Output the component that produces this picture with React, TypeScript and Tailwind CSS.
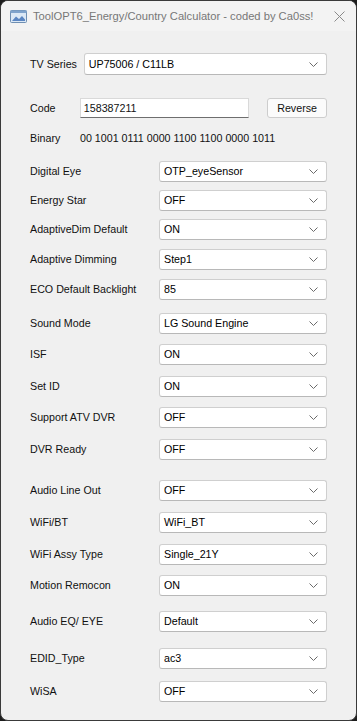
import React from "react";

interface Row {
  label: string;
  value: string;
  mt: string;
}

const rows: Row[] = [
  { label: "Digital Eye", value: "OTP_eyeSensor", mt: "mt-[15px]" },
  { label: "Energy Star", value: "OFF", mt: "mt-[8px]" },
  { label: "AdaptiveDim Default", value: "ON", mt: "mt-[8px]" },
  { label: "Adaptive Dimming", value: "Step1", mt: "mt-[9px]" },
  { label: "ECO Default Backlight", value: "85", mt: "mt-[9px]" },
  { label: "Sound Mode", value: "LG Sound Engine", mt: "mt-[13px]" },
  { label: "ISF", value: "ON", mt: "mt-[10px]" },
  { label: "Set ID", value: "ON", mt: "mt-[11px]" },
  { label: "Support ATV DVR", value: "OFF", mt: "mt-[10px]" },
  { label: "DVR Ready", value: "OFF", mt: "mt-[11px]" },
  { label: "Audio Line Out", value: "OFF", mt: "mt-[20px]" },
  { label: "WiFi/BT", value: "WiFi_BT", mt: "mt-[11px]" },
  { label: "WiFi Assy Type", value: "Single_21Y", mt: "mt-[11px]" },
  { label: "Motion Remocon", value: "ON", mt: "mt-[10px]" },
  { label: "Audio EQ/ EYE", value: "Default", mt: "mt-[15px]" },
  { label: "EDID_Type", value: "ac3", mt: "mt-[16px]" },
  { label: "WiSA", value: "OFF", mt: "mt-[12px]" },
];

const Chevron = () => (
  <svg width="9" height="5" viewBox="0 0 9 5" className="shrink-0">
    <path d="M0.5 0.5 L4.5 4.5 L8.5 0.5" fill="none" stroke="#6b6b6b" strokeWidth="1" />
  </svg>
);

const Combo = ({ value, className }: { value: string; className: string }) => (
  <div
    className={`${className} flex items-center justify-between bg-white border border-[#cfcfcf] border-b-[#b8b8b8] rounded-[3px] pl-[4px] pr-[8px] text-black`}
  >
    <span>{value}</span>
    <Chevron />
  </div>
);

const WinIcon = () => (
  <svg width="17" height="13" viewBox="0 0 17 13">
    <rect x="0.5" y="0.5" width="16" height="12" rx="1" fill="#dbe8f5" stroke="#6f8fb3" />
    <rect x="0.5" y="0.5" width="16" height="2.5" fill="#7fa3cc" />
    <path d="M2 11 L6 6.5 L9 9 L12 6 L15 9.5 L15 11 Z" fill="#5b86c2" />
  </svg>
);

export default function App() {
  return (
    <div className="w-[357px] h-[721px] bg-[#1d1d1d]">
      <div
        className="h-full flex flex-col bg-[#f0f0f0] border border-[#3a3a3a] rounded-[8px] overflow-hidden text-[10.7px] text-[#111]"
        style={{ fontFamily: '"Liberation Sans", Arial, sans-serif' }}
      >
        {/* Title bar */}
        <div className="h-[30px] flex items-center bg-[#f3f3f3] pl-[9px] pr-[10px]">
          <WinIcon />
          <span className="ml-[6px] text-[11.2px] text-[#777] whitespace-nowrap">
            ToolOPT6_Energy/Country Calculator - coded by Ca0ss!
          </span>
          <svg width="11" height="11" viewBox="0 0 11 11" className="ml-auto mr-[1px]">
            <path d="M0.5 0.5 L10.5 10.5 M10.5 0.5 L0.5 10.5" stroke="#8a8a8a" strokeWidth="1" />
          </svg>
        </div>

        <div className="flex flex-col pl-[29px] pr-[29px]">
          {/* TV Series */}
          <div className="mt-[22px] h-[22px] flex items-center">
            <span className="w-[54px]">TV Series</span>
            <Combo value="UP75006 / C11LB" className="w-[244px] h-[22px]" />
          </div>

          {/* Code */}
          <div className="mt-[23px] h-[20px] flex items-center">
            <span className="w-[50px]">Code</span>
            <div className="w-[170px] h-[20px] bg-white border border-[#d9d9d9] border-b-[#6e6e6e] flex items-center pl-[3px]">
              158387211
            </div>
            <button className="ml-[18px] w-[60px] h-[20px] bg-[#fbfbfb] border border-[#cdcdcd] rounded-[3px] text-[#111]">
              Reverse
            </button>
          </div>

          {/* Binary */}
          <div className="mt-[12px] h-[16px] flex items-center">
            <span className="w-[50px]">Binary</span>
            <span>00 1001 0111 0000 1100 1100 0000 1011</span>
          </div>

          {rows.map((r) => (
            <div key={r.label} className={`${r.mt} h-[21px] flex items-center`}>
              <span className="w-[129px] shrink-0">{r.label}</span>
              <Combo value={r.value} className="w-[169px] h-[21px]" />
            </div>
          ))}
        </div>
      </div>
    </div>
  );
}
